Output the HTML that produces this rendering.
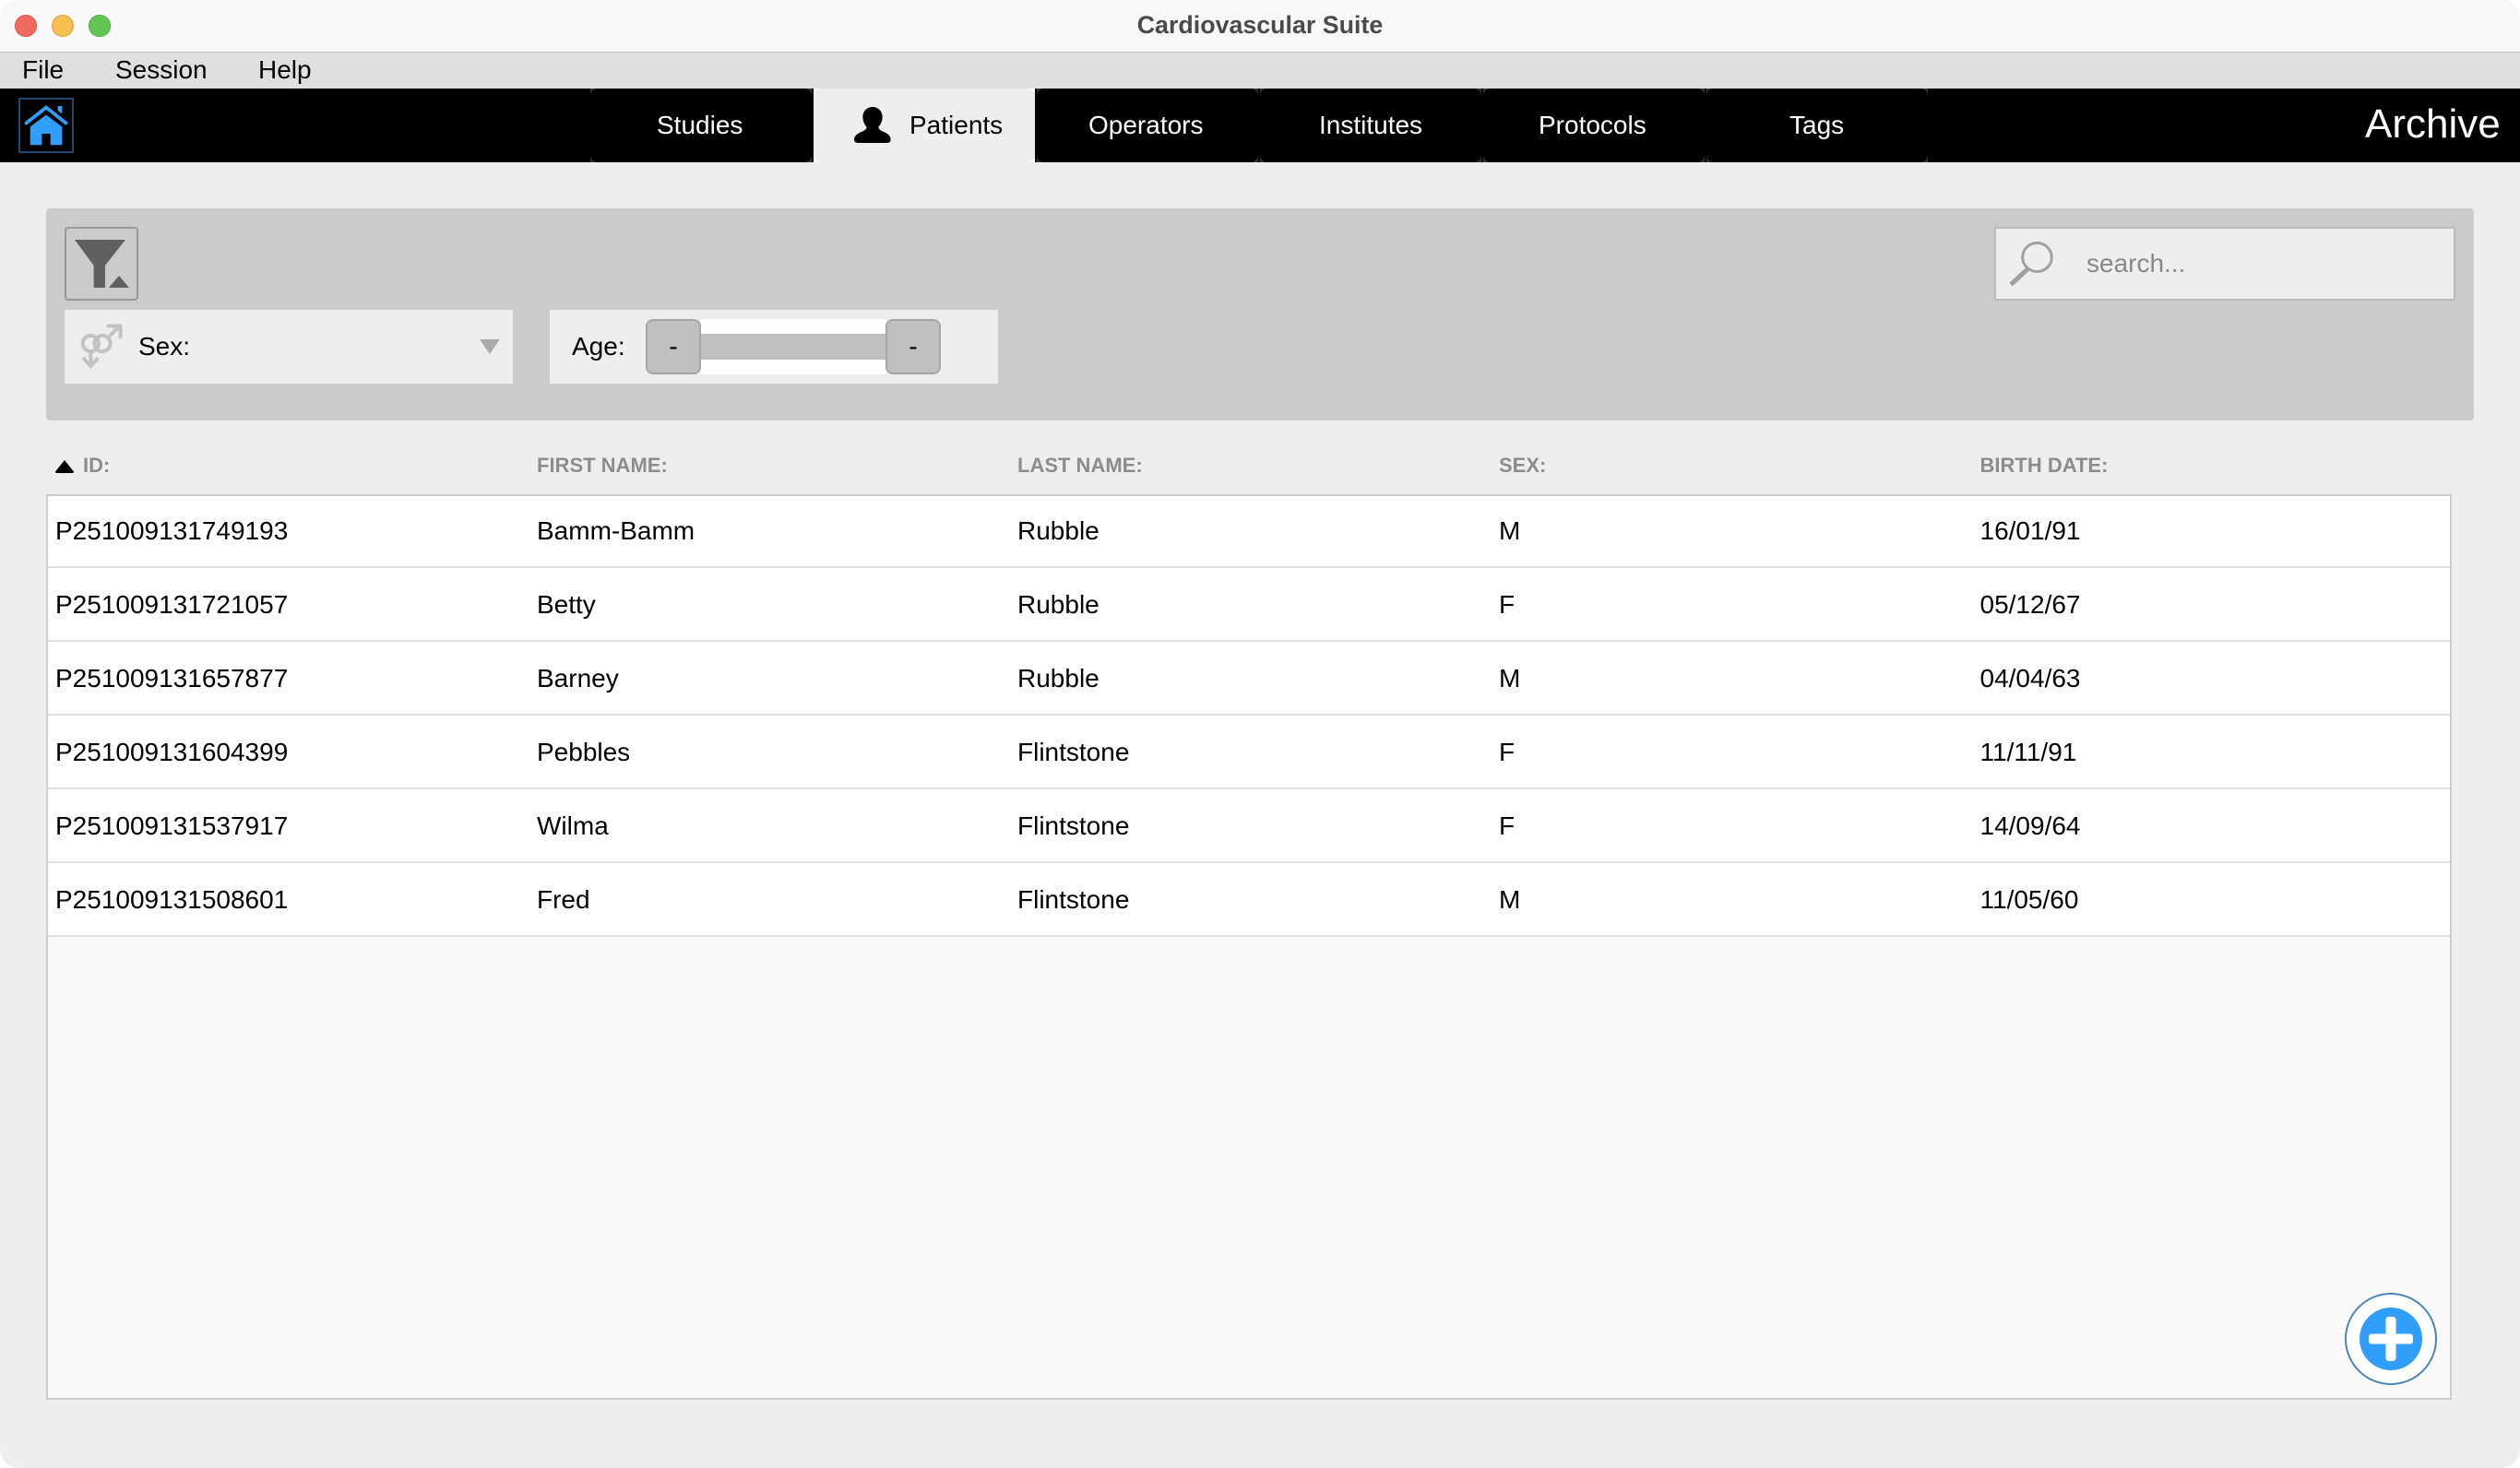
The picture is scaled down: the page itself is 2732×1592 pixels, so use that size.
<!DOCTYPE html>
<html>
<head>
<meta charset="utf-8">
<title>Cardiovascular Suite</title>
<style>
html,body{margin:0;padding:0;background:#fff;}
body{width:2732px;height:1592px;overflow:hidden;position:relative;font-family:"Liberation Sans",sans-serif;}
#win{position:absolute;left:0;top:0;width:2732px;height:1592px;background:#eee;border-radius:20px;overflow:hidden;}
.a{position:absolute;}
.t{position:absolute;white-space:nowrap;font-size:28px;line-height:40px;color:#000;}
.tab{position:absolute;top:96px;width:240px;height:80px;background:#333;}
.tab i{display:block;width:240px;height:80px;background:#000;border-radius:8px;}
.h{position:absolute;top:490px;white-space:nowrap;font-size:22px;line-height:30px;font-weight:bold;color:#8c8c8c;}
.line{position:absolute;left:52px;width:2604px;height:2px;background:#ddd;}
</style>
</head>
<body>
<div id="win">
  <!-- title bar -->
  <div class="a" style="left:0;top:0;width:2732px;height:56px;background:#f8f8f8;"></div>
  <div class="a" style="left:0;top:56px;width:2732px;height:1px;background:#c4c4c4;"></div>
  <div class="a" style="left:16px;top:16px;width:24px;height:24px;border-radius:50%;background:#f16a60;box-shadow:inset 0 0 0 1px #d95a50;"></div>
  <div class="a" style="left:56px;top:16px;width:24px;height:24px;border-radius:50%;background:#f6bf50;box-shadow:inset 0 0 0 1px #dea63c;"></div>
  <div class="a" style="left:96px;top:16px;width:24px;height:24px;border-radius:50%;background:#62c554;box-shadow:inset 0 0 0 1px #52ad45;"></div>
  <div class="t" style="left:0;top:7px;width:2732px;text-align:center;font-size:26.8px;font-weight:bold;color:#4a4a4a;">Cardiovascular Suite</div>

  <!-- menu -->
  <div class="a" style="left:0;top:57px;width:2732px;height:39px;background:#dfdfdf;"></div>
  <div class="t" style="left:24px;top:56px;">File</div>
  <div class="t" style="left:125px;top:56px;">Session</div>
  <div class="t" style="left:280px;top:56px;">Help</div>

  <!-- nav -->
  <div class="a" style="left:0;top:96px;width:2732px;height:80px;background:#000;"></div>
  <div class="a" style="left:20px;top:106px;width:56px;height:56px;border:2px solid #25476f;"></div>
  <svg class="a" style="left:0;top:96px;" width="100" height="80" viewBox="0 96 100 80">
    <path d="M28.5 133.5 L50 116.5 L71.5 133.5" fill="none" stroke="#2f9ffb" stroke-width="3.8" stroke-linecap="round" stroke-linejoin="miter"/>
    <path d="M62.7 115 H67.3 V123.5 L62.7 120 Z" fill="#2f9ffb"/>
    <path d="M50 124.5 L67.3 137.5 V155.5 Q67.3 157.3 65.5 157.3 H54.7 V145 H45.3 V157.3 H34.5 Q32.7 157.3 32.7 155.5 V137.5 Z" fill="#2f9ffb"/>
  </svg>

  <div class="tab" style="left:640px;"><i></i></div>
  <div class="tab" style="left:882px;background:#fff;"><i style="background:#eee;"></i></div>
  <div class="tab" style="left:1124px;"><i></i></div>
  <div class="tab" style="left:1366px;"><i></i></div>
  <div class="tab" style="left:1608px;"><i></i></div>
  <div class="tab" style="left:1850px;"><i></i></div>

  <div class="t" style="left:712px;top:116px;color:#fff;">Studies</div>
  <svg class="a" style="left:920px;top:110px;" width="52" height="52" viewBox="920 110 52 52">
    <path d="M946 116 C952 116 956.6 120.5 956.6 126.5 C956.6 131 955 135 952.5 137.5 C952.3 139.5 953.5 141 957 142.5 C962 144.6 965.6 147 965.6 151.5 C965.6 154 964 155 961 155 H931 C928 155 926 154 926 151.5 C926 147 930 144.6 935 142.5 C938.5 141 939.7 139.5 939.5 137.5 C937 135 935.4 131 935.4 126.5 C935.4 120.5 940 116 946 116 Z" fill="#000"/>
  </svg>
  <div class="t" style="left:986px;top:116px;">Patients</div>
  <div class="t" style="left:1180px;top:116px;color:#fff;">Operators</div>
  <div class="t" style="left:1430px;top:116px;color:#fff;">Institutes</div>
  <div class="t" style="left:1668px;top:116px;color:#fff;">Protocols</div>
  <div class="t" style="left:1940px;top:116px;color:#fff;">Tags</div>
  <div class="t" style="left:2564px;top:105px;font-size:44px;line-height:60px;color:#fff;">Archive</div>

  <!-- filter panel -->
  <div class="a" style="left:50px;top:226px;width:2632px;height:230px;background:#cbcbcb;border-radius:4px;"></div>
  <div class="a" style="left:70px;top:246px;width:76px;height:76px;border:2px solid #999;border-radius:4px;"></div>
  <svg class="a" style="left:70px;top:246px;" width="80" height="80" viewBox="70 246 80 80">
    <path d="M81 260 H136 L114 288 V311 Q114 312 113 312 H102.6 Q101.6 312 101.6 311 V288 Z" fill="#606060"/>
    <path d="M129 299 L140 312 H118 Z" fill="#606060"/>
  </svg>

  <div class="a" style="left:70px;top:336px;width:486px;height:80px;background:#eee;"></div>
  <svg class="a" style="left:80px;top:345px;" width="60" height="60" viewBox="80 345 60 60">
    <g fill="none" stroke="#c2c2c2" stroke-width="4">
      <circle cx="98.3" cy="372.5" r="8.6"/>
      <circle cx="111" cy="372.5" r="8.6"/>
      <path d="M117 366 L130 353.5"/>
      <path d="M116 353.5 H130.5 V367"/>
      <path d="M98.3 381 V396"/>
      <path d="M90 388 L98.3 397 L106.6 388"/>
    </g>
  </svg>
  <div class="t" style="left:150px;top:356px;">Sex:</div>
  <svg class="a" style="left:520px;top:368px;" width="22" height="16" viewBox="0 0 22 16"><path d="M0 0 H22 L11 16 Z" fill="#aaa"/></svg>

  <div class="a" style="left:596px;top:336px;width:486px;height:80px;background:#eee;"></div>
  <div class="t" style="left:620px;top:356px;">Age:</div>
  <div class="a" style="left:760px;top:346px;width:200px;height:60px;background:#fff;"></div>
  <div class="a" style="left:760px;top:362px;width:200px;height:28px;background:#c0c0c0;"></div>
  <div class="a" style="left:700px;top:346px;width:56px;height:56px;border:2px solid #a6a6a6;border-radius:8px;background:#c0c0c0;"></div>
  <div class="a" style="left:960px;top:346px;width:56px;height:56px;border:2px solid #a6a6a6;border-radius:8px;background:#c0c0c0;"></div>
  <div class="t" style="left:700px;top:356px;width:60px;text-align:center;">-</div>
  <div class="t" style="left:960px;top:356px;width:60px;text-align:center;">-</div>

  <div class="a" style="left:2162px;top:246px;width:496px;height:76px;border:2px solid #bbb;background:#eee;"></div>
  <svg class="a" style="left:2170px;top:256px;" width="60" height="60" viewBox="2170 256 60 60">
    <ellipse cx="2208.5" cy="279" rx="15.8" ry="15.5" fill="none" stroke="#a0a0a0" stroke-width="3"/>
    <path d="M2198 292 L2180 308.5" stroke="#a0a0a0" stroke-width="5" fill="none"/>
  </svg>
  <div class="t" style="left:2262px;top:266px;color:#888;">search...</div>

  <!-- table headers -->
  <svg class="a" style="left:60px;top:499px;" width="20" height="14" viewBox="0 0 20 14"><path d="M10 0 L20 12.5 Q20 14 18.5 14 H1.5 Q0 14 0 12.5 Z" fill="#000"/></svg>
  <div class="h" style="left:90px;">ID:</div>
  <div class="h" style="left:582px;">FIRST NAME:</div>
  <div class="h" style="left:1103px;">LAST NAME:</div>
  <div class="h" style="left:1625px;">SEX:</div>
  <div class="h" style="left:2146.5px;">BIRTH DATE:</div>

  <!-- table -->
  <div class="a" style="left:50px;top:536px;width:2604px;height:978px;border:2px solid #ccc;background:#f9f9f9;"></div>
  <div class="a" style="left:52px;top:538px;width:2604px;height:476px;background:#fff;"></div>
  <div class="line" style="top:614px;"></div>
  <div class="line" style="top:694px;"></div>
  <div class="line" style="top:774px;"></div>
  <div class="line" style="top:854px;"></div>
  <div class="line" style="top:934px;"></div>
  <div class="line" style="top:1014px;"></div>

  <div class="t" style="left:60px;top:556px;">P251009131749193</div>
  <div class="t" style="left:582px;top:556px;">Bamm-Bamm</div>
  <div class="t" style="left:1103px;top:556px;">Rubble</div>
  <div class="t" style="left:1625px;top:556px;">M</div>
  <div class="t" style="left:2146.5px;top:556px;">16/01/91</div>

  <div class="t" style="left:60px;top:636px;">P251009131721057</div>
  <div class="t" style="left:582px;top:636px;">Betty</div>
  <div class="t" style="left:1103px;top:636px;">Rubble</div>
  <div class="t" style="left:1625px;top:636px;">F</div>
  <div class="t" style="left:2146.5px;top:636px;">05/12/67</div>

  <div class="t" style="left:60px;top:716px;">P251009131657877</div>
  <div class="t" style="left:582px;top:716px;">Barney</div>
  <div class="t" style="left:1103px;top:716px;">Rubble</div>
  <div class="t" style="left:1625px;top:716px;">M</div>
  <div class="t" style="left:2146.5px;top:716px;">04/04/63</div>

  <div class="t" style="left:60px;top:796px;">P251009131604399</div>
  <div class="t" style="left:582px;top:796px;">Pebbles</div>
  <div class="t" style="left:1103px;top:796px;">Flintstone</div>
  <div class="t" style="left:1625px;top:796px;">F</div>
  <div class="t" style="left:2146.5px;top:796px;">11/11/91</div>

  <div class="t" style="left:60px;top:876px;">P251009131537917</div>
  <div class="t" style="left:582px;top:876px;">Wilma</div>
  <div class="t" style="left:1103px;top:876px;">Flintstone</div>
  <div class="t" style="left:1625px;top:876px;">F</div>
  <div class="t" style="left:2146.5px;top:876px;">14/09/64</div>

  <div class="t" style="left:60px;top:956px;">P251009131508601</div>
  <div class="t" style="left:582px;top:956px;">Fred</div>
  <div class="t" style="left:1103px;top:956px;">Flintstone</div>
  <div class="t" style="left:1625px;top:956px;">M</div>
  <div class="t" style="left:2146.5px;top:956px;">11/05/60</div>

  <!-- add button -->
  <svg class="a" style="left:2540px;top:1400px;" width="104" height="104" viewBox="2540 1400 104 104">
    <circle cx="2592" cy="1452" r="49" fill="#fff" stroke="#4a86b8" stroke-width="2"/>
    <circle cx="2592" cy="1452" r="34" fill="#2f9ffb"/>
    <rect x="2568" y="1446.5" width="48" height="11" rx="3" fill="#fff"/>
    <rect x="2586.5" y="1428" width="11" height="48" rx="3" fill="#fff"/>
  </svg>
</div>
</body>
</html>
